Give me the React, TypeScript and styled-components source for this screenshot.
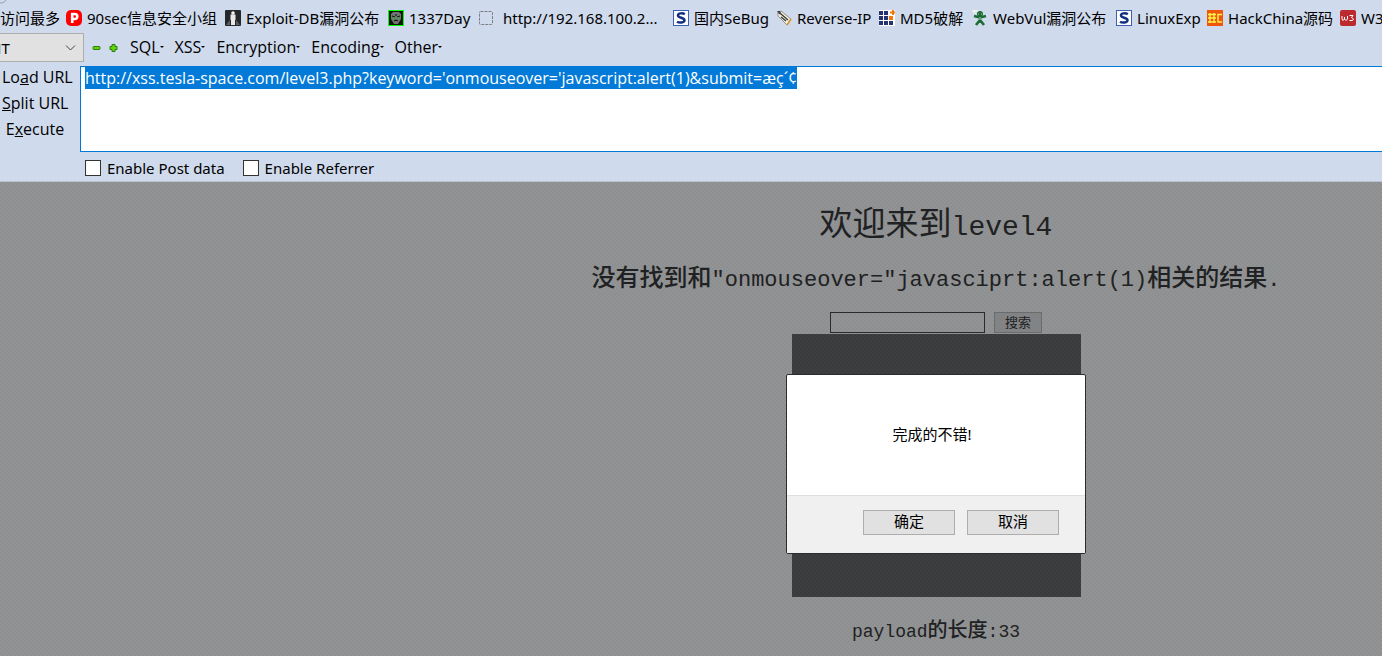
import React, { useEffect, useRef } from "react";
import styled, { createGlobalStyle } from "styled-components";

const GlobalStyle = createGlobalStyle`
  *, *::before, *::after { box-sizing: border-box; }
  html, body { margin: 0; }
  body {
    background: #909192;
    color: #000;
    font: 15px/20px "Noto Sans", "Noto Sans CJK SC", sans-serif;
    overflow-x: hidden;
  }
  button, select, textarea, input { font: inherit; color: inherit; margin: 0; }
`;

const Page = styled.div`
  min-height: 100vh;
  display: flex;
  flex-direction: column;
`;

const Chrome = styled.header`
  position: relative;
  background: #cfdaec;
  border-bottom: 1px solid #b9c2d0;
  overflow: hidden;
`;

const TabEdge = styled.svg`
  position: absolute;
  top: 0;
  left: 0;
`;

const Bookmarks = styled.nav`
  display: flex;
  align-items: center;
  gap: 6px;
  height: 33px;
  padding-top: 3px;
  white-space: nowrap;
`;

const Bookmark = styled.a<{ $width: number }>`
  display: flex;
  align-items: center;
  flex: none;
  gap: 5px;
  min-width: ${(p) => p.$width}px;
  color: #000;
  text-decoration: none;
  svg { flex: none; }
`;

const Toolbar = styled.div`
  display: flex;
  align-items: center;
  height: 30px;
`;

const TypeBox = styled.div`
  position: relative;
  flex: none;
  width: 84px;
  height: 30px;
  overflow: hidden;
  display: flex;
  justify-content: flex-end;
  svg { position: absolute; right: 8px; top: 11px; pointer-events: none; }
`;

const TypeSelect = styled.select`
  appearance: none;
  flex: none;
  width: 108px;
  height: 29px;
  padding: 0 8px;
  background: #e1e1e1;
  border: 1px solid #adadad;
  border-radius: 0;
`;

const IconButton = styled.button`
  display: flex;
  padding: 0;
  border: 0;
  background: none;
  margin-left: 8px;
`;

const Menus = styled.div`
  display: flex;
  gap: 11px;
  margin-left: 12px;
  padding-bottom: 2px;
`;

const MenuButton = styled.button`
  display: flex;
  align-items: center;
  padding: 0;
  border: 0;
  background: none;
  font: 16px/20px "Open Sans", sans-serif;
  &::after {
    content: "";
    border: 2px solid transparent;
    border-top-color: #000;
    border-bottom: 0;
  }
`;

const UrlRow = styled.div`
  display: flex;
  margin-top: 3px;
`;

const Actions = styled.div`
  flex: none;
  width: 80px;
  display: flex;
  flex-direction: column;
  align-items: flex-start;
  gap: 6px;
  padding: 1px 0 0 2px;
`;

const Action = styled.button`
  padding: 0 2px 0 0;
  border: 0;
  background: none;
  min-width: 68px;
  font: 16px/20px "Open Sans", sans-serif;
`;

const UrlBox = styled.textarea`
  flex: 1;
  height: 86px;
  margin-right: -2px;
  padding: 1px 4px;
  background: #fff;
  border: 1px solid #0078d7;
  border-radius: 0;
  outline: 0;
  resize: none;
  font: 16px/20px "Open Sans", sans-serif;
  &::selection { background: rgba(0, 120, 215, 0.99); color: #fff; }
`;

const Options = styled.div`
  display: flex;
  align-items: center;
  gap: 18px;
  height: 29px;
  padding: 3px 0 0 85px;
`;

const Option = styled.label`
  display: flex;
  align-items: center;
  gap: 6px;
`;

const Tick = styled.input`
  appearance: none;
  width: 16px;
  height: 16px;
  border: 1px solid #333;
  background: #fff;
`;

const Content = styled.main`
  flex: 1;
  display: flex;
  flex-direction: column;
  align-items: center;
  padding: 21px 0 12px 490px;
  color: #202122;
  white-space: nowrap;
  background: repeating-conic-gradient(#8e8f90 0 25%, #929394 0 50%) 0 0 / 4px 4px;
`;

const Mono = styled.span<{ $size: number }>`
  font-family: "Liberation Mono", monospace;
  font-size: ${(p) => p.$size}px;
`;

const Title = styled.h1`
  margin: 0;
  font-size: 33px;
  font-weight: 400;
  line-height: 40px;
`;

const Result = styled.h2`
  margin: 13px 0 0;
  font-size: 24px;
  font-weight: 500;
  line-height: 32px;
`;

const Search = styled.form`
  display: flex;
  gap: 9px;
  margin-top: 15px;
`;

const SearchInput = styled.input`
  width: 155px;
  height: 21px;
  background: transparent;
  border: 1px solid #2a2a2b;
  border-radius: 0;
`;

const SearchButton = styled.button`
  width: 48px;
  height: 21px;
  padding: 0 0 2px;
  background: #828384;
  border: 1px solid #6a6b6c;
  font-size: 13px;
  line-height: 16px;
`;

const Picture = styled.section`
  position: relative;
  width: 289px;
  height: 263px;
  margin-top: 1px;
  background: repeating-conic-gradient(#3a3b3c 0 25%, #3d3e3f 0 50%) 0 0 / 4px 4px;
`;

const Dialog = styled.div`
  position: absolute;
  top: 40px;
  left: 50%;
  width: 300px;
  height: 180px;
  margin-left: -150px;
  display: flex;
  flex-direction: column;
  background: #fff;
  border: 1px solid #2c2c2d;
  border-radius: 2px;
  overflow: hidden;
  color: #000;
`;

const Message = styled.p`
  flex: 1;
  margin: 0;
  padding: 0 8px 2px 0;
  display: flex;
  align-items: center;
  justify-content: center;
`;

const DialogButtons = styled.div`
  display: flex;
  justify-content: flex-end;
  gap: 12px;
  height: 58px;
  padding: 14px 26px 0 0;
  background: #f0f0f0;
  border-top: 1px solid #dfdfdf;
`;

const DialogButton = styled.button`
  width: 92px;
  height: 25px;
  padding: 0 0 4px;
  background: #e1e1e1;
  border: 1px solid #adadad;
`;

const Length = styled.h3`
  margin: 19px 0 0;
  font-size: 20px;
  font-weight: 500;
  line-height: 28px;
`;

const PIcon = () => (
  <svg width="16" height="16" viewBox="0 0 16 16">
    <rect width="16" height="16" rx="5" fill="#f00" />
    <path d="M6.2 13V4h2.6a2.5 2.5 0 0 1 0 5H6.2" fill="none" stroke="#fff" strokeWidth="2.6" />
  </svg>
);

const ExploitIcon = () => (
  <svg width="16" height="16" viewBox="0 0 16 16">
    <rect width="16" height="16" rx="1" fill="#25282b" />
    <path d="M1 15l4-5v5zM15 15l-4-5v5z" fill="#59605f" />
    <circle cx="8" cy="3" r="1.8" fill="#f4f4f4" />
    <path d="M5.500 4.500h5V10H10v5H6v-5h-.5z" fill="#e9e9e9" />
  </svg>
);

const DayIcon = () => (
  <svg width="16" height="16" viewBox="0 0 16 16">
    <rect x=".5" y=".5" width="15" height="15" fill="#101510" stroke="#0f0" />
    <path d="M3 4l2-2h6l2 2v5l-3 5H6L3 9z" fill="#6f756f" />
    <path d="M4 6l3 1M12 6L9 7M6 11l2-1 2 1M8 4v2" stroke="#111" />
    <path d="M5 8h2M9 8h2M7 9h1" stroke="#16c928" />
  </svg>
);

const BlankIcon = () => (
  <svg width="20" height="16" viewBox="0 0 20 16">
    <rect x="1.500" y="1.500" width="13" height="13" rx="1" fill="none" stroke="#7b7f85" strokeDasharray="3 1" />
  </svg>
);

const SIcon = () => (
  <svg width="16" height="16" viewBox="0 0 16 16">
    <rect x=".5" y=".5" width="15" height="15" fill="#fff" stroke="#3f5fb5" />
    <path d="M11.800 4.200C10 3 5 2.800 5 5.400S11.500 7.500 11.500 10.200 6 13 4 11.700" fill="none" stroke="#123080" strokeWidth="2.500" />
  </svg>
);

const TagIcon = () => (
  <svg width="15" height="16" viewBox="0 0 15 16">
    <path d="M1 2l3-1 10 8-4 6L1 6z" fill="#f3efdf" stroke="#807b70" strokeWidth=".8" />
    <path d="M10 15l4-6" stroke="#d8952c" strokeWidth="1.500" />
    <path d="M0 1h3l2 4-3-1z" fill="#444" />
    <path d="M4 4l7 6M4 7l5 4" stroke="#3b3b3b" strokeWidth="1.400" />
  </svg>
);

const GridIcon = () => (
  <svg width="16" height="16" viewBox="0 0 16 16">
    <rect width="16" height="16" fill="#fff" />
    <path d="M0 1h4v4H0zM5 1h4v4H5zM0 6h4v4H0zM5 6h4v4H5zM0 11h4v4H0zM5 11h4v4H5zM10 11h4v4h-4z" fill="#24346f" />
    <path d="M10 6h4v4h-4zM13 0h2v1.500h1v2h-1V5h-2V3.500h-2v-2h2z" fill="#f4780c" />
  </svg>
);

const BugIcon = () => (
  <svg width="16" height="16" viewBox="0 0 16 16">
    <path d="M0 0h8L2 4z" fill="#eef2ee" />
    <circle cx="8" cy="4" r="3" fill="#1d6b35" />
    <path d="M8 6v6M2 6l4 1h4l4-1M8 10l-4 5M8 10l4 5" fill="none" stroke="#1d6b35" strokeWidth="2.600" />
    <path d="M6 4h1M9 4h1M8 7v3" stroke="#a7d49f" />
  </svg>
);

const HcIcon = () => (
  <svg width="16" height="16" viewBox="0 0 16 16">
    <rect width="16" height="16" fill="#f0560a" />
    <path d="M1 4.500h8M1 8h8M1 12h8M3 3v10M7 3v10M15 4.500h-4v7.500h4" fill="none" stroke="#fff04a" strokeWidth="1.500" />
  </svg>
);

const W3Icon = () => (
  <svg width="16" height="16" viewBox="0 0 16 16">
    <rect width="16" height="16" rx="2" fill="#bd2a2e" />
    <path d="M2 6v3l1 1.500L4.500 9V7v2L6 10.500 7.500 9V6M9.500 5.500h3.500L11.500 7.500 13.500 9l-1 1.500h-3" fill="none" stroke="#fff" />
  </svg>
);

const bookmarks = [
  { label: "访问最多", Icon: null, width: 60 },
  { label: "90sec信息安全小组", Icon: PIcon, width: 153 },
  { label: "Exploit-DB漏洞公布", Icon: ExploitIcon, width: 157 },
  { label: "1337Day", Icon: DayIcon, width: 84 },
  { label: "http://192.168.100.2...", Icon: BlankIcon, width: 189 },
  { label: "国内SeBug", Icon: SIcon, width: 98 },
  { label: "Reverse-IP", Icon: TagIcon, width: 96 },
  { label: "MD5破解", Icon: GridIcon, width: 87 },
  { label: "WebVul漏洞公布", Icon: BugIcon, width: 138 },
  { label: "LinuxExp", Icon: SIcon, width: 85 },
  { label: "HackChina源码", Icon: HcIcon, width: 127 },
  { label: "W3", Icon: W3Icon, width: 40 },
];

const menus = ["SQL", "XSS", "Encryption", "Encoding", "Other"];

export default function App() {
  const url = useRef<HTMLTextAreaElement>(null);

  useEffect(() => {
    url.current?.focus();
    url.current?.select();
  }, []);

  return (
    <Page>
      <GlobalStyle />
      <Chrome>
        <TabEdge width="8" height="4" viewBox="0 0 8 4">
          <path d="M0 3C3 3 5 2 6 0" fill="none" stroke="#9a9da3" />
        </TabEdge>
        <Bookmarks>
          {bookmarks.map(({ label, Icon, width }) => (
            <Bookmark href="#" key={label} $width={width}>
              {Icon && <Icon />}
              {label}
            </Bookmark>
          ))}
        </Bookmarks>
        <Toolbar>
          <TypeBox>
            <TypeSelect aria-label="Type" defaultValue="INT">
              <option>INT</option>
            </TypeSelect>
            <svg width="11" height="8" viewBox="0 0 11 8">
              <path d="M1 1.500l4.500 4.500L10 1.500" fill="none" stroke="#444" />
            </svg>
          </TypeBox>
          <IconButton aria-label="Remove">
            <svg width="9" height="10" viewBox="0 0 9 10">
              <rect x="1" y="3.500" width="7" height="3" rx="1" fill="#5fd60a" stroke="#2c7d0c" />
            </svg>
          </IconButton>
          <IconButton aria-label="Add">
            <svg width="9" height="10" viewBox="0 0 9 10">
              <path d="M3 1.500h3v2h2v3H6v2H3v-2H1v-3h2z" fill="#5fd60a" stroke="#2c7d0c" strokeLinejoin="round" />
            </svg>
          </IconButton>
          <Menus>
            {menus.map((m) => (
              <MenuButton key={m}>{m}</MenuButton>
            ))}
          </Menus>
        </Toolbar>
        <UrlRow>
          <Actions>
            <Action>Lo<u>a</u>d URL</Action>
            <Action><u>S</u>plit URL</Action>
            <Action>E<u>x</u>ecute</Action>
          </Actions>
          <UrlBox
            ref={url}
            aria-label="URL"
            spellCheck={false}
            defaultValue="http://xss.tesla-space.com/level3.php?keyword='onmouseover='javascript:alert(1)&submit=æç´¢"
          />
        </UrlRow>
        <Options>
          <Option><Tick type="checkbox" />Enable Post data</Option>
          <Option><Tick type="checkbox" />Enable Referrer</Option>
        </Options>
      </Chrome>
      <Content>
        <Title>欢迎来到<Mono $size={28}>level4</Mono></Title>
        <Result>
          没有找到和<Mono $size={22}>"onmouseover="javasciprt:alert(1)</Mono>相关的结果<Mono $size={22}>.</Mono>
        </Result>
        <Search onSubmit={(e) => e.preventDefault()}>
          <SearchInput aria-label="keyword" />
          <SearchButton>搜索</SearchButton>
        </Search>
        <Picture>
          <Dialog role="dialog" aria-label="完成的不错!">
            <Message>完成的不错!</Message>
            <DialogButtons>
              <DialogButton>确定</DialogButton>
              <DialogButton>取消</DialogButton>
            </DialogButtons>
          </Dialog>
        </Picture>
        <Length>
          <Mono $size={18}>payload</Mono>的长度<Mono $size={18}>:33</Mono>
        </Length>
      </Content>
    </Page>
  );
}
